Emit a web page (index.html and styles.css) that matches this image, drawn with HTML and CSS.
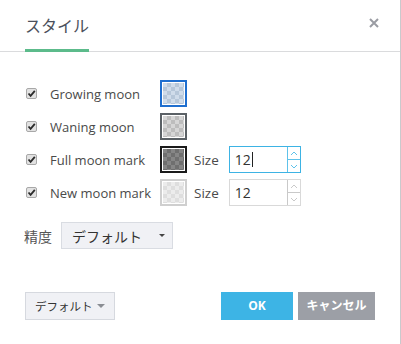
FILE: index.html
```html
<!DOCTYPE html>
<html lang="ja">

<head>
    <meta charset="UTF-8">
    <title>スタイル</title>
    <link rel="stylesheet" href="styles.css">
</head>

<body>
    <div class="dialog">
        <div class="header">
            <div class="tab">スタイル</div>
            <span class="close">
                <svg width="10" height="10" viewBox="0 0 10 10">
                    <path d="M1 1 L9 9 M9 1 L1 9" stroke="#9a9ca3" stroke-width="2" fill="none" />
                </svg>
            </span>
        </div>

        <div class="content">
            <div class="row">
                <span class="check"><svg width="9" height="9" viewBox="0 0 9 9"><path d="M1.5 4.5 L3.6 6.8 L7.8 1.8" stroke="#2b2b2b" stroke-width="1.8" fill="none" /></svg></span>
                <span class="label">Growing moon</span>
                <span class="swatch swatch-growing"></span>
            </div>
            <div class="row">
                <span class="check"><svg width="9" height="9" viewBox="0 0 9 9"><path d="M1.5 4.5 L3.6 6.8 L7.8 1.8" stroke="#2b2b2b" stroke-width="1.8" fill="none" /></svg></span>
                <span class="label">Waning moon</span>
                <span class="swatch swatch-waning"></span>
            </div>
            <div class="row">
                <span class="check"><svg width="9" height="9" viewBox="0 0 9 9"><path d="M1.5 4.5 L3.6 6.8 L7.8 1.8" stroke="#2b2b2b" stroke-width="1.8" fill="none" /></svg></span>
                <span class="label">Full moon mark</span>
                <span class="swatch swatch-full"></span>
                <span class="size-label">Size</span>
                <div class="spin spin-focus">
                    <span class="spin-value">12<span class="caret-line"></span></span>
                    <span class="spin-buttons">
                        <span class="spin-btn"><svg width="8" height="5" viewBox="0 0 8 5"><path d="M1 4 L4 1 L7 4" stroke="currentColor" fill="none" /></svg></span>
                        <span class="spin-btn"><svg width="8" height="5" viewBox="0 0 8 5"><path d="M1 1 L4 4 L7 1" stroke="currentColor" fill="none" /></svg></span>
                    </span>
                </div>
            </div>
            <div class="row">
                <span class="check"><svg width="9" height="9" viewBox="0 0 9 9"><path d="M1.5 4.5 L3.6 6.8 L7.8 1.8" stroke="#2b2b2b" stroke-width="1.8" fill="none" /></svg></span>
                <span class="label">New moon mark</span>
                <span class="swatch swatch-new"></span>
                <span class="size-label">Size</span>
                <div class="spin">
                    <span class="spin-value">12</span>
                    <span class="spin-buttons">
                        <span class="spin-btn"><svg width="8" height="5" viewBox="0 0 8 5"><path d="M1 4 L4 1 L7 4" stroke="currentColor" fill="none" /></svg></span>
                        <span class="spin-btn"><svg width="8" height="5" viewBox="0 0 8 5"><path d="M1 1 L4 4 L7 1" stroke="currentColor" fill="none" /></svg></span>
                    </span>
                </div>
            </div>

            <div class="precision">
                <span class="precision-label">精度</span>
                <div class="select">
                    <span>デフォルト</span>
                    <span class="tri tri-dark"></span>
                </div>
            </div>
        </div>

        <div class="footer">
            <div class="btn-default">
                <span>デフォルト</span>
                <span class="tri tri-gray"></span>
            </div>
            <div class="footer-right">
                <button class="btn btn-ok">OK</button>
                <button class="btn btn-cancel">キャンセル</button>
            </div>
        </div>
    </div>
</body>

</html>
```

FILE: styles.css
```css
body {
    margin: 0;
    background: #ffffff;
    font-family: "Open Sans", "Noto Sans CJK JP", sans-serif;
}

.dialog {
    width: 401px;
    height: 344px;
    box-sizing: border-box;
    border-right: 1px solid #c9cacd;
    background: #ffffff;
}

.header {
    display: flex;
    height: 52px;
    box-sizing: border-box;
    border-bottom: 1px solid #dadbdd;
}

.tab {
    margin-left: 25px;
    height: 52px;
    box-sizing: border-box;
    padding-top: 13px;
    line-height: 24px;
    font-family: "Noto Sans CJK JP", sans-serif;
    font-size: 16px;
    font-weight: 400;
    color: #4b505b;
    border-bottom: 3px solid #5cbb8b;
}

.close {
    margin-left: auto;
    margin-right: 21px;
    margin-top: 18px;
    width: 10px;
    height: 10px;
}

.close svg,
.check svg,
.spin-btn svg {
    display: block;
}

.content {
    padding: 28px 0 0 24px;
}

.row {
    display: flex;
    align-items: center;
    height: 27px;
    margin-bottom: 6px;
}

.check {
    display: flex;
    align-items: center;
    justify-content: center;
    width: 11px;
    height: 11px;
    margin-left: 2px;
    box-sizing: border-box;
    border: 1px solid #a8a8a8;
    border-radius: 2px;
    background: #e2e2e2;
}

.label {
    width: 110px;
    margin-left: 13px;
    font-size: 13px;
    color: #4a4a4a;
}

.swatch {
    width: 27px;
    height: 27px;
    box-sizing: border-box;
    border: 2px solid var(--bd);
    padding: 1px;
    background-color: var(--c1);
    background-image:
        linear-gradient(45deg, var(--c2) 25%, transparent 25%, transparent 75%, var(--c2) 75%),
        linear-gradient(45deg, var(--c2) 25%, transparent 25%, transparent 75%, var(--c2) 75%);
    background-size: 8px 8px;
    background-position: 0 0, 4px 4px;
    background-clip: content-box;
    background-origin: content-box;
}

.swatch-growing {
    --bd: #1f6fcf;
    --c1: #cfdcea;
    --c2: #b6c7d9;
}

.swatch-waning {
    --bd: #5b6166;
    --c1: #d6d6d6;
    --c2: #bdbdbd;
}

.swatch-full {
    --bd: #1b1b1b;
    --c1: #868686;
    --c2: #6f6f6f;
}

.swatch-new {
    --bd: #cfcfcf;
    --c1: #ececec;
    --c2: #dedede;
}

.size-label {
    margin-left: 7px;
    font-size: 13.5px;
    color: #4a4a4a;
}

.spin {
    display: flex;
    width: 72px;
    height: 27px;
    margin-left: 10px;
    box-sizing: border-box;
    border: 1px solid #d9d9d9;
    color: #c9c9c9;
}

.spin-focus {
    border-color: #3db3e4;
    color: #5ec2ea;
}

.spin-value {
    display: flex;
    align-items: center;
    flex: 1;
    padding-left: 5px;
    font-size: 14px;
    color: #333333;
}

.caret-line {
    display: inline-block;
    width: 1px;
    height: 15px;
    margin-left: 1px;
    background: #222222;
}

.spin-buttons {
    display: flex;
    flex-direction: column;
    width: 12px;
    border-left: 1px solid currentColor;
}

.spin-btn {
    display: flex;
    align-items: center;
    justify-content: center;
    flex: 1;
}

.spin-btn + .spin-btn {
    border-top: 1px solid currentColor;
}

.precision {
    display: flex;
    align-items: center;
    margin-top: 16px;
}

.precision-label {
    width: 37px;
    font-family: "Noto Sans CJK JP", sans-serif;
    font-size: 14px;
    color: #555555;
}

.select {
    display: flex;
    align-items: center;
    width: 112px;
    height: 27px;
    box-sizing: border-box;
    padding: 0 7px 0 10px;
    border: 1px solid #d9dce2;
    background: #f0f1f5;
    font-family: "Noto Sans CJK JP", sans-serif;
    font-size: 14px;
    color: #333333;
}

.tri {
    margin-left: auto;
    width: 0;
    height: 0;
    border-left: 3px solid transparent;
    border-right: 3px solid transparent;
    border-top: 3px solid #444444;
}

.tri-gray {
    border-left-width: 4px;
    border-right-width: 4px;
    border-top: 4px solid #8a8d93;
}

.footer {
    display: flex;
    justify-content: space-between;
    margin-top: 43px;
    padding: 0 25px;
}

.btn-default {
    display: flex;
    align-items: center;
    width: 90px;
    height: 28px;
    box-sizing: border-box;
    padding: 0 9px;
    border: 1px solid #d6d9df;
    background: #f0f1f5;
    font-family: "Noto Sans CJK JP", sans-serif;
    font-size: 11.5px;
    color: #333333;
}

.footer-right {
    display: flex;
    gap: 5px;
}

.btn {
    height: 28px;
    border: none;
    padding: 0 0 2px;
    color: #ffffff;
    font-family: "Open Sans", "Noto Sans CJK JP", sans-serif;
    font-size: 12px;
    font-weight: bold;
}

.btn-ok {
    width: 72px;
    background: #3db4e5;
}

.btn-cancel {
    width: 77px;
    background: #9c9fa6;
}
```
